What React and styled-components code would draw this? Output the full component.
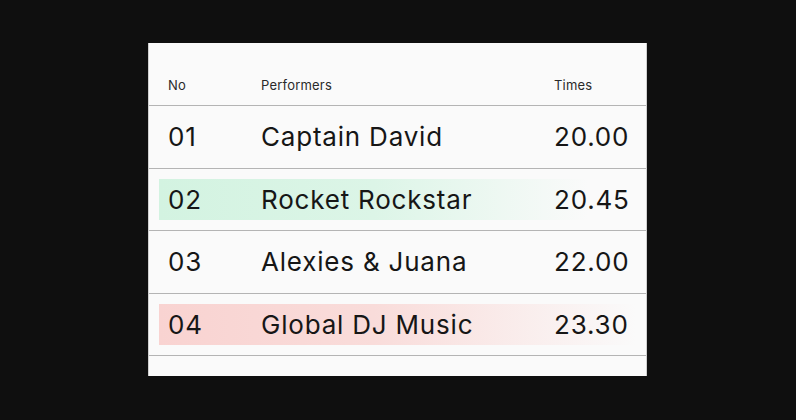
import React from "react";
import styled, { createGlobalStyle } from "styled-components";

const Global = createGlobalStyle`
  html, body { margin: 0; padding: 0; background: #0f0f0f; }
  body { width: 796px; height: 420px; overflow: hidden; }
`;

const Stage = styled.div`
  width: 796px;
  height: 420px;
  display: flex;
  justify-content: center;
  padding-top: 43px;
  box-sizing: border-box;
  padding-right: 1px;
`;

const Panel = styled.div`
  width: 499px;
  height: 333px;
  box-sizing: border-box;
  background: #fafafa;
  border-left: 1px solid #cfcfcf;
  border-right: 1px solid #cfcfcf;
  font-family: "Inter", "Noto Sans", sans-serif;
  color: #161616;
`;

const Header = styled.div`
  height: 63px;
  box-sizing: border-box;
  display: grid;
  grid-template-columns: 93px 293px 1fr;
  align-items: center;
  padding: 22px 0 0 19px;
  border-bottom: 1px solid #b4b4b4;
  font-size: 13px;
  letter-spacing: 0.2px;
  color: #2a2a2a;
`;

const Row = styled.div`
  height: 62.5px;
  box-sizing: border-box;
  padding: 10px 10px 10px 10px;
  border-bottom: 1px solid #b4b4b4;
`;

const bands = {
  green: "linear-gradient(90deg, #d3f3e1 0%, #dcf5e7 45%, rgba(250,250,250,0) 90%)",
  red: "linear-gradient(90deg, #f9d3d1 0%, #f9dcda 45%, rgba(250,250,250,0) 100%)",
  none: "transparent",
};

const Band = styled.div`
  height: 100%;
  display: grid;
  grid-template-columns: 93px 293px 1fr;
  align-items: center;
  padding-left: 9px;
  background: ${(p) => bands[p.$tone]};
  font-size: 26px;
  font-weight: 400;
  letter-spacing: 0.8px;
  line-height: 1;
  padding-top: 1px;
  box-sizing: border-box;
`;

const rows = [
  { no: "01", name: "Captain David", time: "20.00", tone: "none" },
  { no: "02", name: "Rocket Rockstar", time: "20.45", tone: "green" },
  { no: "03", name: "Alexies & Juana", time: "22.00", tone: "none" },
  { no: "04", name: "Global DJ Music", time: "23.30", tone: "red" },
];

export default function App() {
  return (
    <>
      <Global />
      <Stage>
        <Panel>
          <Header>
            <span>No</span>
            <span>Performers</span>
            <span>Times</span>
          </Header>
          {rows.map((r) => (
            <Row key={r.no}>
              <Band $tone={r.tone}>
                <span>{r.no}</span>
                <span>{r.name}</span>
                <span>{r.time}</span>
              </Band>
            </Row>
          ))}
        </Panel>
      </Stage>
    </>
  );
}
